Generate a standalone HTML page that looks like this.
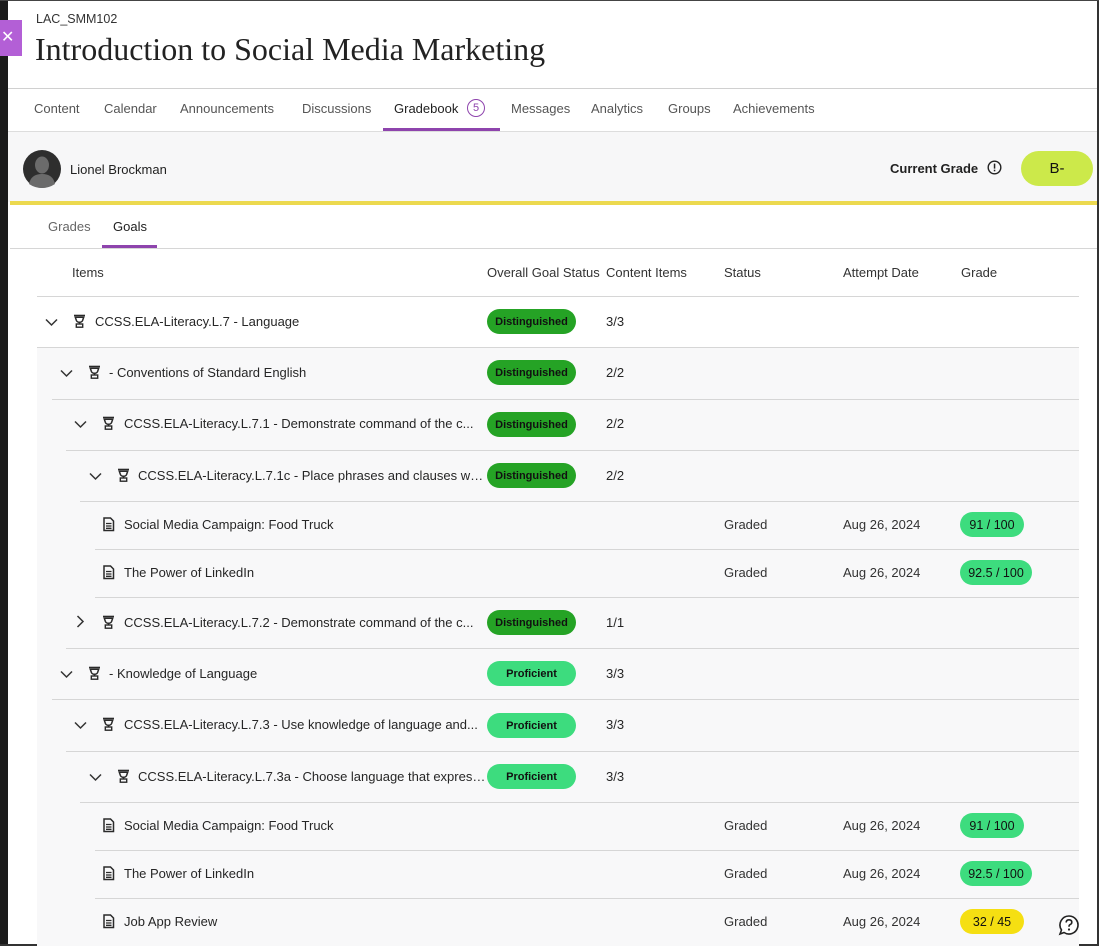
<!DOCTYPE html>
<html><head><meta charset="utf-8">
<style>
*{box-sizing:border-box;margin:0;padding:0}
body{width:1099px;height:946px;overflow:hidden;background:#fff;font-family:"Liberation Sans",sans-serif;color:#222;position:relative}
.a{position:absolute}
.t{font-size:13px;color:#262626;white-space:nowrap}
.nav{font-size:13px;color:#555;top:101px}
.line{position:absolute;height:1px;background:#d6d6d6;right:20px}
.badge{position:absolute;left:487px;width:89px;height:25px;border-radius:13px;font-size:11px;font-weight:bold;color:#111;display:flex;align-items:center;justify-content:center}
.dist{background:#25a325}
.prof{background:#3ddc7e}
.pill{position:absolute;left:960px;height:25px;border-radius:13px;font-size:12.5px;color:#111;display:flex;align-items:center;justify-content:center}
svg{position:absolute}
</style></head><body>
<div class="a" style="left:0;top:0;width:8px;height:946px;background:#1b1b1b"></div>
<div class="a" style="left:0;top:20px;width:22px;height:36px;background:#b35fd6;color:#fff;font-size:16px;line-height:36px;padding-left:1px">✕</div>
<div class="a" style="left:1097px;top:0;width:2px;height:946px;background:#333"></div>
<div class="a" style="left:0;top:944px;width:1099px;height:2px;background:#333"></div>
<div class="a" style="left:0;top:0;width:1099px;height:1px;background:#444"></div>

<div class="a" style="left:36px;top:12px;font-size:12.5px;color:#333">LAC_SMM102</div>
<div class="a" style="left:35px;top:31px;font-family:'Liberation Serif',serif;font-size:32px;color:#222">Introduction to Social Media Marketing</div>
<div class="a" style="left:8px;top:88px;width:1089px;height:1px;background:#d0d0d0"></div>

<div class="a nav" style="left:34px">Content</div>
<div class="a nav" style="left:104px">Calendar</div>
<div class="a nav" style="left:180px">Announcements</div>
<div class="a nav" style="left:302px">Discussions</div>
<div class="a nav" style="left:394px;color:#222">Gradebook</div>
<div class="a" style="left:467px;top:99px;width:18px;height:18px;border:1.3px solid #8e44ad;border-radius:50%;font-size:11px;color:#8e44ad;text-align:center;line-height:16px">5</div>
<div class="a" style="left:383px;top:128px;width:117px;height:3px;background:#8e44ad"></div>
<div class="a nav" style="left:511px">Messages</div>
<div class="a nav" style="left:591px">Analytics</div>
<div class="a nav" style="left:668px">Groups</div>
<div class="a nav" style="left:733px">Achievements</div>

<div class="a" style="left:8px;top:131px;width:1089px;height:71px;background:#f7f7f8;border-top:1px solid #ddd"></div>
<svg style="left:23px;top:150px" width="38" height="38" viewBox="0 0 38 38"><circle cx="19" cy="19" r="19" fill="#2e2e2e"/><ellipse cx="19" cy="15" rx="7" ry="8.5" fill="#6b6b6b"/><path d="M6 34 Q8 24 19 24 Q30 24 32 34 Q26 38 19 38 Q12 38 6 34Z" fill="#6b6b6b"/></svg>
<div class="a" style="left:70px;top:162px;font-size:13px;color:#222">Lionel Brockman</div>
<div class="a" style="left:890px;top:161px;font-size:13px;font-weight:bold;color:#222">Current Grade</div>
<svg style="left:987px;top:160px" width="15" height="15" viewBox="0 0 15 15"><circle cx="7.5" cy="7.5" r="6.3" fill="none" stroke="#222" stroke-width="1.4"/><rect x="6.8" y="3.6" width="1.5" height="5" fill="#222"/><rect x="6.8" y="9.7" width="1.5" height="1.6" fill="#222"/></svg>
<div class="a" style="left:1021px;top:151px;width:72px;height:35px;border-radius:18px;background:#cce94a;font-size:15px;text-align:center;line-height:35px;color:#111">B-</div>
<div class="a" style="left:10px;top:201px;width:1087px;height:4px;background:#ecd94f"></div>

<div class="a" style="left:48px;top:219px;font-size:13px;color:#666">Grades</div>
<div class="a" style="left:113px;top:219px;font-size:13px;color:#222">Goals</div>
<div class="a" style="left:102px;top:245px;width:55px;height:3px;background:#8e44ad"></div>
<div class="a" style="left:10px;top:248px;width:1087px;height:1px;background:#d6d6d6"></div>

<div class="a t" style="left:72px;top:265px;color:#333">Items</div>
<div class="a t" style="left:487px;top:265px;color:#333">Overall Goal Status</div>
<div class="a t" style="left:606px;top:265px;color:#333">Content Items</div>
<div class="a t" style="left:724px;top:265px;color:#333">Status</div>
<div class="a t" style="left:843px;top:265px;color:#333">Attempt Date</div>
<div class="a t" style="left:961px;top:265px;color:#333">Grade</div>
<div class="line" style="left:37px;top:296px"></div>

<div class="a" style="left:37px;top:348px;width:1042px;height:598px;background:#f8f8f9"></div>

<svg width="0" height="0" style="position:absolute"><defs>
<g id="tr"><path d="M1 1.5H12" stroke="#2a2a2a" stroke-width="1.6"/><path d="M2.3 3.2H10.7L9.6 6.5Q8.8 8.3 6.5 8.3Q4.2 8.3 3.4 6.5Z" fill="none" stroke="#2a2a2a" stroke-width="1.5"/><path d="M6.5 8.3V10" stroke="#2a2a2a" stroke-width="1.5"/><rect x="3.3" y="10" width="6.4" height="3.2" fill="none" stroke="#2a2a2a" stroke-width="1.4"/></g>
<g id="dn"><path d="M1 1.5L6.5 7L12 1.5" fill="none" stroke="#333" stroke-width="1.5"/></g>
<g id="rt"><path d="M1.5 1L7 6.5L1.5 12" fill="none" stroke="#333" stroke-width="1.5"/></g>
<g id="dc"><path d="M1 1H7.5L10.5 4V13.5H1Z" fill="none" stroke="#2a2a2a" stroke-width="1.5"/><path d="M3 6.5H8.5M3 9H8.5M3 11.3H8.5" stroke="#2a2a2a" stroke-width="1.3"/></g>
</defs></svg>

<svg style="left:45px;top:318px" width="13" height="9"><use href="#dn"/></svg>
<svg style="left:73px;top:314px" width="13" height="14"><use href="#tr"/></svg>
<div class="a t" style="left:95px;top:314px">CCSS.ELA-Literacy.L.7 - Language</div>
<div class="badge dist" style="top:309px">Distinguished</div>
<div class="a t" style="left:606px;top:314px">3/3</div>
<div class="line" style="left:37px;top:347px"></div>

<svg style="left:60px;top:369px" width="13" height="9"><use href="#dn"/></svg>
<svg style="left:88px;top:365px" width="13" height="14"><use href="#tr"/></svg>
<div class="a t" style="left:109px;top:365px">- Conventions of Standard English</div>
<div class="badge dist" style="top:360px">Distinguished</div>
<div class="a t" style="left:606px;top:365px">2/2</div>
<div class="line" style="left:52px;top:399px"></div>

<svg style="left:74px;top:420px" width="13" height="9"><use href="#dn"/></svg>
<svg style="left:102px;top:416px" width="13" height="14"><use href="#tr"/></svg>
<div class="a t" style="left:124px;top:416px">CCSS.ELA-Literacy.L.7.1 - Demonstrate command of the c...</div>
<div class="badge dist" style="top:412px">Distinguished</div>
<div class="a t" style="left:606px;top:416px">2/2</div>
<div class="line" style="left:66px;top:450px"></div>

<svg style="left:89px;top:472px" width="13" height="9"><use href="#dn"/></svg>
<svg style="left:117px;top:468px" width="13" height="14"><use href="#tr"/></svg>
<div class="a t" style="left:138px;top:468px;width:348px;overflow:hidden;text-overflow:ellipsis">CCSS.ELA-Literacy.L.7.1c - Place phrases and clauses within a sentence</div>
<div class="badge dist" style="top:463px">Distinguished</div>
<div class="a t" style="left:606px;top:468px">2/2</div>
<div class="line" style="left:80px;top:501px"></div>

<svg style="left:103px;top:517px" width="12" height="15"><use href="#dc"/></svg>
<div class="a t" style="left:124px;top:517px">Social Media Campaign: Food Truck</div>
<div class="a t" style="left:724px;top:517px;color:#333">Graded</div>
<div class="a t" style="left:843px;top:517px;color:#333">Aug 26, 2024</div>
<div class="pill prof" style="top:512px;width:64px">91 / 100</div>
<div class="line" style="left:95px;top:549px"></div>

<svg style="left:103px;top:565px" width="12" height="15"><use href="#dc"/></svg>
<div class="a t" style="left:124px;top:565px">The Power of LinkedIn</div>
<div class="a t" style="left:724px;top:565px;color:#333">Graded</div>
<div class="a t" style="left:843px;top:565px;color:#333">Aug 26, 2024</div>
<div class="pill prof" style="top:560px;width:72px">92.5 / 100</div>
<div class="line" style="left:95px;top:597px"></div>

<svg style="left:76px;top:615px" width="9" height="14"><use href="#rt"/></svg>
<svg style="left:102px;top:615px" width="13" height="14"><use href="#tr"/></svg>
<div class="a t" style="left:124px;top:615px">CCSS.ELA-Literacy.L.7.2 - Demonstrate command of the c...</div>
<div class="badge dist" style="top:610px">Distinguished</div>
<div class="a t" style="left:606px;top:615px">1/1</div>
<div class="line" style="left:66px;top:648px"></div>

<svg style="left:60px;top:670px" width="13" height="9"><use href="#dn"/></svg>
<svg style="left:88px;top:666px" width="13" height="14"><use href="#tr"/></svg>
<div class="a t" style="left:109px;top:666px">- Knowledge of Language</div>
<div class="badge prof" style="top:661px">Proficient</div>
<div class="a t" style="left:606px;top:666px">3/3</div>
<div class="line" style="left:52px;top:699px"></div>

<svg style="left:74px;top:721px" width="13" height="9"><use href="#dn"/></svg>
<svg style="left:102px;top:717px" width="13" height="14"><use href="#tr"/></svg>
<div class="a t" style="left:124px;top:717px">CCSS.ELA-Literacy.L.7.3 - Use knowledge of language and...</div>
<div class="badge prof" style="top:713px">Proficient</div>
<div class="a t" style="left:606px;top:717px">3/3</div>
<div class="line" style="left:66px;top:751px"></div>

<svg style="left:89px;top:773px" width="13" height="9"><use href="#dn"/></svg>
<svg style="left:117px;top:769px" width="13" height="14"><use href="#tr"/></svg>
<div class="a t" style="left:138px;top:769px;width:348px;overflow:hidden;text-overflow:ellipsis">CCSS.ELA-Literacy.L.7.3a - Choose language that expresses ideas</div>
<div class="badge prof" style="top:764px">Proficient</div>
<div class="a t" style="left:606px;top:769px">3/3</div>
<div class="line" style="left:80px;top:802px"></div>

<svg style="left:103px;top:818px" width="12" height="15"><use href="#dc"/></svg>
<div class="a t" style="left:124px;top:818px">Social Media Campaign: Food Truck</div>
<div class="a t" style="left:724px;top:818px;color:#333">Graded</div>
<div class="a t" style="left:843px;top:818px;color:#333">Aug 26, 2024</div>
<div class="pill prof" style="top:813px;width:64px">91 / 100</div>
<div class="line" style="left:95px;top:850px"></div>

<svg style="left:103px;top:866px" width="12" height="15"><use href="#dc"/></svg>
<div class="a t" style="left:124px;top:866px">The Power of LinkedIn</div>
<div class="a t" style="left:724px;top:866px;color:#333">Graded</div>
<div class="a t" style="left:843px;top:866px;color:#333">Aug 26, 2024</div>
<div class="pill prof" style="top:861px;width:72px">92.5 / 100</div>
<div class="line" style="left:95px;top:898px"></div>

<svg style="left:103px;top:914px" width="12" height="15"><use href="#dc"/></svg>
<div class="a t" style="left:124px;top:914px">Job App Review</div>
<div class="a t" style="left:724px;top:914px;color:#333">Graded</div>
<div class="a t" style="left:843px;top:914px;color:#333">Aug 26, 2024</div>
<div class="pill" style="top:909px;width:64px;background:#f5df12">32 / 45</div>

<svg style="left:1058px;top:914px" width="22" height="22" viewBox="0 0 22 22"><path d="M11 2A9 9 0 1 1 6 18.5L2 20L3.5 16A9 9 0 0 1 11 2Z" fill="#fff" stroke="#222" stroke-width="1.6"/><path d="M8.2 8.5Q8.2 5.8 11 5.8Q13.8 5.8 13.8 8.3Q13.8 10 11.8 10.8Q11 11.2 11 12.8" fill="none" stroke="#222" stroke-width="1.6"/><circle cx="11" cy="15.5" r="1.1" fill="#222"/></svg>
</body></html>
